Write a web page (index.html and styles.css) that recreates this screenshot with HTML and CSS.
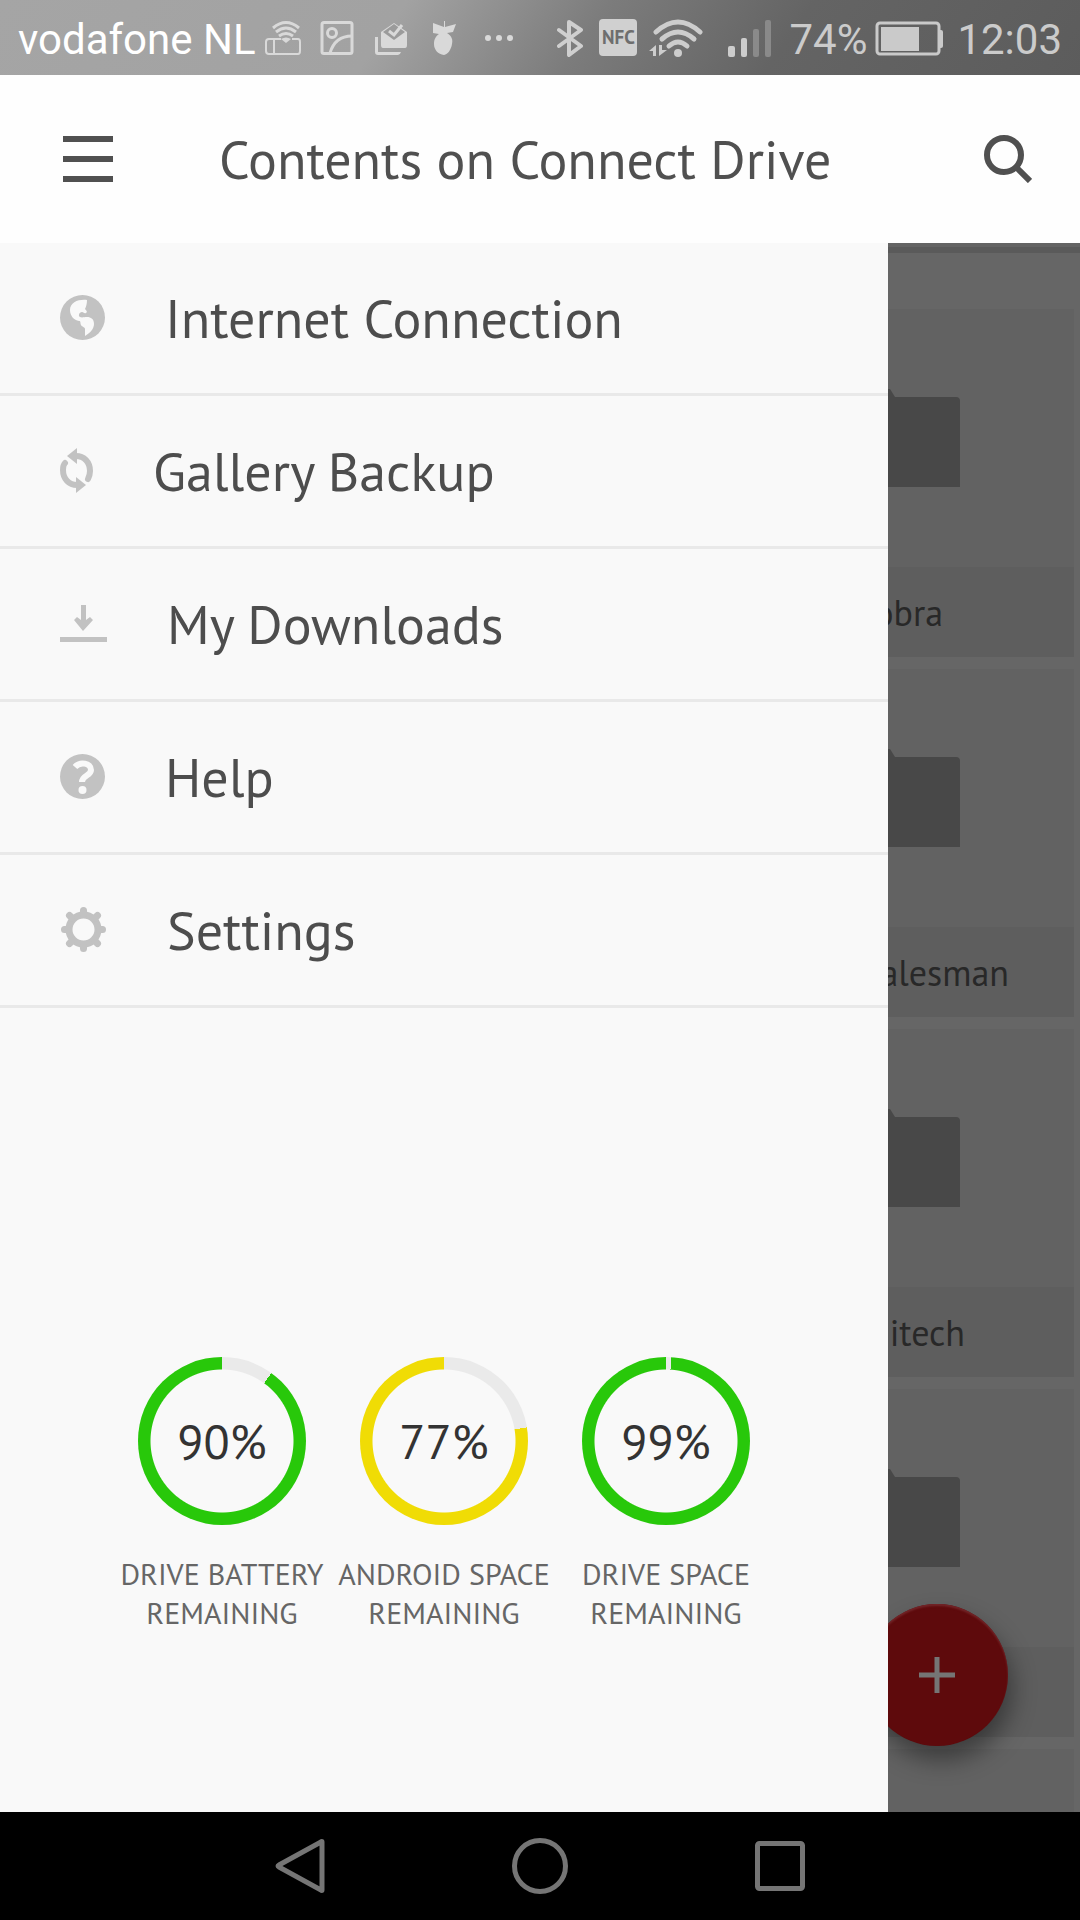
FILE: index.html
```html
<!DOCTYPE html>
<html lang="en">
<head>
  <meta charset="utf-8">
  <meta name="viewport" content="width=device-width, initial-scale=1">
  <title>Contents on Connect Drive</title>
  <link rel="stylesheet" href="styles.css">
</head>
<body>

  <div class="statusbar">
    <span class="operator">vodafone NL</span>
    <div class="notifications">
      <!-- router -->
      <svg width="38" height="36" viewBox="0 0 38 36" fill="none" stroke="#d9d9d9" stroke-width="2">
        <path d="M17 19H5q-3 0-3 3v9q0 3 3 3h29q2 0 2-3v-9q0-3-2-3h-6M10 19v15"/>
        <path d="M9 8q13-11 26 0M12 12q10-8 20 0M15 16q7-5 14 0" stroke-width="3"/>
        <path d="M17 19q5-3 10 0l-5 4z" fill="#d9d9d9" stroke="none"/>
      </svg>
      <!-- picture -->
      <svg width="34" height="36" viewBox="0 0 34 36" fill="none" stroke="#d9d9d9" stroke-width="3">
        <rect x="2" y="2.500" width="30" height="31" rx="2"/>
        <circle cx="12" cy="13" r="4.500"/>
        <path d="M10 33Q15 16 32 16"/>
      </svg>
      <!-- inbox -->
      <svg width="38" height="36" viewBox="0 0 38 36">
        <path d="M3 17h3v15h23q-1 3-3 3H6q-3 0-3-3z" fill="#d9d9d9"/>
        <path d="M9 12L22 3l13 9v13q0 3-2 3H11q-2 0-2-3z" fill="#d9d9d9"/>
        <path d="M11 12l11 8 11-8-11-8z" fill="#9b9b9b"/>
        <path d="M17 11l5 4L30 5" fill="none" stroke="#d9d9d9" stroke-width="3"/>
      </svg>
      <!-- fruit -->
      <svg width="32" height="36" viewBox="0 0 32 36" fill="#d9d9d9">
        <path d="M5 3l11 4V1h1v6l11-3-3 8-6 1c5 3 6 7 5 11-1 6-4 10-8 11-6-1-10-5-10-11 0-5 2-8 5-10l-6-1z"/>
      </svg>
      <svg width="42" height="36" viewBox="0 0 42 36" fill="#d9d9d9">
        <circle cx="10" cy="18" r="3"/><circle cx="21" cy="18" r="3"/><circle cx="32" cy="18" r="3"/>
      </svg>
    </div>
    <div class="system">
      <!-- bluetooth -->
      <svg width="40" height="38" viewBox="0 0 40 38" fill="none" stroke="#cfcfcf" stroke-width="4" stroke-linejoin="round" stroke-linecap="round">
        <path d="M8 11l22 16-12 9V3l12 8L8 27"/>
      </svg>
      <span class="nfc">NFC</span>
      <!-- wifi with traffic arrows -->
      <svg width="62" height="38" viewBox="0 0 62 38">
        <g fill="none" stroke="#cdcdcd" stroke-width="5" stroke-linecap="round">
          <path d="M11 13q22-20 44 0"/><path d="M17 20q16-14 32 0"/><path d="M24 27q9-8 18 0"/>
        </g>
        <circle cx="33" cy="34" r="4" fill="#cdcdcd"/>
        <path d="M4 32l7-6v11H8v-5zM14 37V26h3v5h5z" fill="#cdcdcd"/>
      </svg>
      <!-- signal -->
      <svg width="66" height="38" viewBox="0 0 66 38" fill="#cdcdcd">
        <rect x="13" y="27" width="7" height="11" rx="2"/>
        <rect x="26" y="19" width="6" height="19" rx="2"/>
        <rect x="38" y="10" width="6" height="28" rx="2" fill="#8a8a8a"/>
        <rect x="50" y="1" width="6" height="37" rx="2" fill="#8a8a8a"/>
      </svg>
      <span>74%</span>
      <!-- battery -->
      <svg width="74" height="38" viewBox="0 0 74 38">
        <rect x="2" y="4" width="62" height="31" rx="3" fill="none" stroke="#cacaca" stroke-width="3"/>
        <rect x="6" y="8" width="38" height="24" fill="#cacaca"/>
        <path d="M65 11h1q2 0 2 2v14q0 2-2 2h-1z" fill="#cacaca"/>
      </svg>
      <span>12:03</span>
    </div>
  </div>

  <header class="appbar">
    <button class="icon-btn" type="button" aria-label="Menu">
      <svg width="50" height="46" viewBox="0 0 50 46" fill="#505050">
        <path d="M0 0h50v6H0zM0 20h50v6H0zM0 40h50v6H0z"/>
      </svg>
    </button>
    <h1>Contents on Connect Drive</h1>
    <button class="icon-btn search" type="button" aria-label="Search">
      <svg width="48" height="48" viewBox="0 0 48 48" fill="none" stroke="#505050" stroke-width="6">
        <circle cx="20" cy="20" r="17"/>
        <path d="M32 32l14 14"/>
      </svg>
    </button>
  </header>

  <main class="content">
    <div class="drawer">
      <nav class="menu">
        <a href="#internet">
          <svg width="45" height="47" viewBox="0 0 45 47">
            <circle cx="22.500" cy="22.500" r="22.500" fill="#c2c2c2"/>
            <path d="M27 5c-8-1-17 2-17 10 0 6 4 10 9 11 2 0 1 2 2 4s4 2 4 4v7c5-3 9-7 9-12s-3-7-7-7c-3 0-5 1-7 0s-1-5 2-5c2 0 2 2 4 1s0-3-1-4c1-2 2-5 2-9z" fill="#f9f9f9"/>
          </svg>
          <span>Internet Connection</span>
        </a>
        <a href="#backup">
          <svg width="33" height="47" viewBox="0 0 33 47" fill="none" stroke="#c2c2c2" stroke-width="6" stroke-linecap="round">
            <path d="M16 8c8 0 14 6 14 15 0 4-1 6-2 8"/>
            <path d="M17 37C9 37 3 31 3 22c0-4 1-6 2-7"/>
            <path d="M17 0v16L7 8zM16 29v16l10-8z" fill="#c2c2c2" stroke="none"/>
          </svg>
          <span>Gallery Backup</span>
        </a>
        <a href="#downloads">
          <svg width="47" height="47" viewBox="0 0 47 47" fill="#c2c2c2">
            <path d="M21 4h5v15l4-3 3 3-10 11-9-11 3-3 4 3zM0 36h47v5H0z"/>
          </svg>
          <span>My Downloads</span>
        </a>
        <a href="#help">
          <svg width="45" height="47" viewBox="0 0 45 47">
            <circle cx="22.500" cy="22.500" r="22.500" fill="#c2c2c2"/>
            <path d="M15 13c5-6 16-4 16 3 0 6-9 5-9 12" fill="none" stroke="#f9f9f9" stroke-width="6"/>
            <circle cx="22.500" cy="36" r="4" fill="#f9f9f9"/>
          </svg>
          <span>Help</span>
        </a>
        <a href="#settings">
          <svg width="47" height="47" viewBox="-23.500 -22.500 47 47" fill="none" stroke="#c2c2c2">
            <circle r="14.500" stroke-width="7"/>
            <path d="M0-16v-3M0 16v3M-16 0h-3M16 0h3M-12-12l-2-2M12-12l2-2M-12 12l-2 2M12 12l2 2" stroke-width="7" stroke-linecap="round"/>
          </svg>
          <span>Settings</span>
        </a>
      </nav>

      <section class="gauges">
        <div class="gauge">
          <div class="ring green" style="--used: 10%"><span>90%</span></div>
          <p>DRIVE BATTERY<br>REMAINING</p>
        </div>
        <div class="gauge">
          <div class="ring yellow" style="--used: 22.4%"><span>77%</span></div>
          <p>ANDROID SPACE<br>REMAINING</p>
        </div>
        <div class="gauge">
          <div class="ring green" style="--used: 1%"><span>99%</span></div>
          <p>DRIVE SPACE<br>REMAINING</p>
        </div>
      </section>
    </div>

    <div class="files">
      <div class="file">
        <div class="thumb"><svg width="72" height="98" viewBox="0 0 72 98"><path d="M0 0h2l5 8h61q4 0 4 4v86H0z" fill="#484848"/></svg></div>
        <div class="name short">obra</div>
      </div>
      <div class="file">
        <div class="thumb"><svg width="72" height="98" viewBox="0 0 72 98"><path d="M0 0h2l5 8h61q4 0 4 4v86H0z" fill="#484848"/></svg></div>
        <div class="name long">alesman</div>
      </div>
      <div class="file">
        <div class="thumb"><svg width="72" height="98" viewBox="0 0 72 98"><path d="M0 0h2l5 8h61q4 0 4 4v86H0z" fill="#484848"/></svg></div>
        <div class="name medium">itech</div>
      </div>
      <div class="file">
        <div class="thumb"><svg width="72" height="98" viewBox="0 0 72 98"><path d="M0 0h2l5 8h61q4 0 4 4v86H0z" fill="#484848"/></svg></div>
        <div class="name"></div>
      </div>
      <div class="file">
        <div class="thumb"></div>
      </div>
      <button class="fab" type="button" aria-label="Add">
        <svg width="36" height="36" viewBox="0 0 36 36" stroke="#757575" stroke-width="5"><path d="M18 0v36M0 18h36"/></svg>
      </button>
    </div>
  </main>

  <footer class="navbar">
    <button type="button" aria-label="Back">
      <svg width="56" height="60" viewBox="0 0 56 60"><path d="M50 6v48q0 1-1 0L7 31q-2-1 0-2L49 6q1-1 1 0z"/></svg>
    </button>
    <button type="button" aria-label="Home">
      <svg width="56" height="60" viewBox="0 0 56 60"><circle cx="28" cy="30" r="25.500"/></svg>
    </button>
    <button type="button" aria-label="Recent apps">
      <svg width="56" height="60" viewBox="0 0 56 60"><rect x="5.500" y="7.500" width="45" height="45" rx="2"/></svg>
    </button>
  </footer>

</body>
</html>
```
FILE: styles.css
```css
* {
  box-sizing: border-box;
}

body {
  margin: 0;
  height: 100vh;
  display: flex;
  flex-direction: column;
  background-color: #666;
  color: #4d4d4d;
  font-family: "PT Sans", Lato, sans-serif;
}

svg {
  display: block;
  flex: none;
}

button {
  padding: 0;
  border: none;
  background: none;
  cursor: pointer;
}

h1, p {
  margin: 0;
  font-weight: normal;
}

/* status bar */
.statusbar {
  display: flex;
  align-items: center;
  gap: 8px;
  height: 75px;
  padding: 0 18px;
  background: linear-gradient(125deg, #a5a5a5 0%, #a2a2a2 36%, #7c7c7c 54%, #646464 72%, #5c5c5c 100%);
  color: #cbcbcb;
  font-family: Roboto, sans-serif;
  font-size: 42px;
  white-space: nowrap;
}

.statusbar span {
  padding-top: 3px;
}

.operator {
  color: #fff;
}

.notifications {
  display: flex;
  gap: 18px;
}

.system {
  display: flex;
  align-items: center;
  gap: 8px;
  margin-left: auto;
}

.statusbar .nfc {
  width: 38px;
  height: 37px;
  padding: 0;
  border-radius: 4px;
  background-color: #d0d0d0;
  color: #6e6e6e;
  font-family: "PT Sans", Lato, sans-serif;
  font-size: 19px;
  font-weight: bold;
  line-height: 37px;
  text-align: center;
}

/* app bar */
.appbar {
  display: flex;
  align-items: center;
  height: 168px;
  padding: 0 48px 0 63px;
  background-color: #fefefe;
}

.appbar h1 {
  margin-left: 106px;
  color: #505050;
  font-size: 54px;
}

.search {
  margin-left: auto;
}

/* drawer and file list */
.content {
  flex: 1;
  min-height: 0;
  display: grid;
  grid-template-columns: 37fr 8fr;
  grid-template-rows: minmax(0, 1fr);
}

.drawer {
  z-index: 1;
  display: flex;
  flex-direction: column;
  background-color: #f9f9f9;
}

.menu a {
  display: flex;
  align-items: center;
  gap: 60px;
  height: 153px;
  padding-left: 60px;
  border-bottom: 3px solid #e9e9e9;
  color: #4d4d4d;
  font-size: 54px;
  text-decoration: none;
}

.gauges {
  display: grid;
  grid-template-columns: repeat(3, 25%);
  justify-content: center;
  margin-top: auto;
  padding-bottom: 180px;
  text-align: center;
}

.gauge p {
  margin-top: 29px;
  color: #666;
  font-size: 30px;
  line-height: 39px;
  white-space: nowrap;
}

.ring {
  display: grid;
  place-items: center;
  width: 168px;
  height: 168px;
  margin: 0 auto;
  border-radius: 50%;
  background:
    radial-gradient(#f9f9f9 71px, transparent 72px) center / 240px 240px,
    conic-gradient(#eaeaea var(--used), var(--color) 0);
  color: #333;
  font-size: 48px;
}

.green {
  --color: #28c80a;
}

.yellow {
  --color: #f0dc05;
}

.files {
  position: relative;
  min-width: 0;
  padding: 62px 6px 0 0;
  border-top: 4px solid #646464;
  background: linear-gradient(#5a5a5a 6px, #666 6px);
}

.file {
  margin-bottom: 12px;
  background-color: #626262;
}

.thumb {
  height: 258px;
  padding-top: 80px;
}

.files .file:nth-child(5) {
  height: 63px;
  margin: 0;
  overflow: hidden;
}

.name {
  display: flex;
  align-items: center;
  justify-content: flex-end;
  height: 90px;
  background-color: #5e5e5e;
  color: #282828;
  font-size: 36px;
}

.short {
  padding-right: 131px;
}

.medium {
  padding-right: 109px;
}

.long {
  padding-right: 65px;
}

.fab {
  position: absolute;
  right: 72px;
  bottom: 66px;
  display: grid;
  place-items: center;
  width: 142px;
  height: 142px;
  border-radius: 50%;
  background-color: #5e0a0c;
  box-shadow: 4px 14px 24px rgba(0, 0, 0, 0.4), inset 0 2px 2px #722528;
}

/* system navigation */
.navbar {
  display: flex;
  align-items: center;
  justify-content: center;
  gap: 184px;
  height: 108px;
  background-color: #000;
}

.navbar svg {
  fill: none;
  stroke: #757575;
  stroke-width: 5;
}
```
